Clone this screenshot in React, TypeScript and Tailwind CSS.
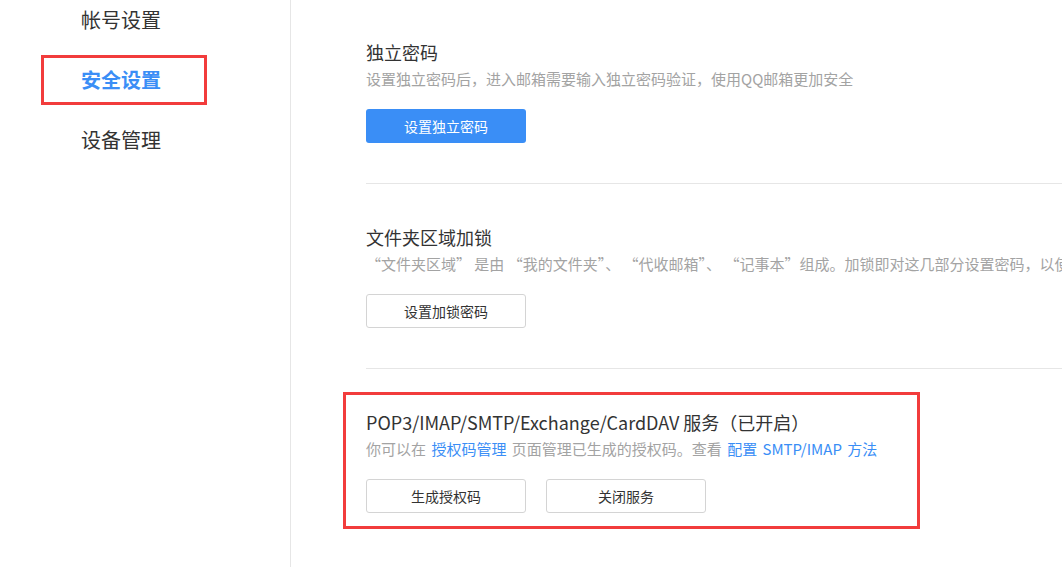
const font = {
  fontFamily: '"Microsoft YaHei", "Noto Sans CJK SC", "Noto Sans", sans-serif',
};

function SideItem({ label, active }: { label: string; active?: boolean }) {
  if (active) {
    return (
      <div className="h-[60px] flex items-center pl-[41px]">
        <span className="h-[50px] flex items-center border-[3px] border-[#f23c3c] pl-[37px] pr-[43px] text-[20px] font-bold text-[#3a8ef6]">
          {label}
        </span>
      </div>
    );
  }
  return (
    <div className="h-[60px] flex items-center pl-[81px] text-[20px] text-[#333]">
      {label}
    </div>
  );
}

function Btn({ label, primary }: { label: string; primary?: boolean }) {
  return (
    <button
      className={
        primary
          ? 'w-[160px] h-[34px] rounded-[3px] bg-[#3a8ef6] text-white text-[14px]'
          : 'w-[160px] h-[34px] rounded-[3px] border border-[#d4d4d4] bg-white text-[#333] text-[14px]'
      }
    >
      {label}
    </button>
  );
}

export default function App() {
  return (
    <div
      className="w-[1062px] h-[567px] overflow-hidden bg-white flex"
      style={font}
    >
      <div className="w-[291px] shrink-0 border-r border-[#e6e6e6] mt-[-10px]">
        <SideItem label="帐号设置" />
        <SideItem label="安全设置" active />
        <SideItem label="设备管理" />
      </div>

      <div className="flex-1 pl-[75px] mt-[-1px] whitespace-nowrap">
        <div className="border-b border-[#e6e6e6] pt-[40px] pb-[40px]">
          <div className="text-[18px] leading-[26px] text-[#333]">独立密码</div>
          <div className="mt-[3px] text-[15px] leading-[22px] text-[#a3a3a3]">
            设置独立密码后，进入邮箱需要输入独立密码验证，使用QQ邮箱更加安全
          </div>
          <div className="mt-[19px]">
            <Btn label="设置独立密码" primary />
          </div>
        </div>

        <div className="border-b border-[#e6e6e6] pt-[40px] pb-[40px]">
          <div className="text-[18px] leading-[26px] text-[#333]">文件夹区域加锁</div>
          <div className="mt-[3px] text-[15px] leading-[22px] text-[#a3a3a3]">
            “文件夹区域” 是由 “我的文件夹”、 “代收邮箱”、 “记事本”组成。加锁即对这几部分设置密码，以使他人无法查看
          </div>
          <div className="mt-[19px]">
            <Btn label="设置加锁密码" />
          </div>
        </div>

        <div className="pt-[23px]">
          <div className="w-[577px] ml-[-23px] border-[3px] border-[#f23c3c] pl-[20px] pt-[14px] pb-[13px]">
            <div className="text-[18px] leading-[26px] text-[#333]">
              POP3/IMAP/SMTP/Exchange/CardDAV 服务（已开启）
            </div>
            <div className="mt-[3px] text-[15px] leading-[22px] text-[#a3a3a3] [word-spacing:2px]">
              你可以在 <span className="text-[#3a8ef6]">授权码管理</span> 页面管理已生成的授权码。查看{' '}
              <span className="text-[#3a8ef6]">配置 SMTP/IMAP 方法</span>
            </div>
            <div className="mt-[19px] flex gap-[20px]">
              <Btn label="生成授权码" />
              <Btn label="关闭服务" />
            </div>
          </div>
        </div>
      </div>
    </div>
  );
}
